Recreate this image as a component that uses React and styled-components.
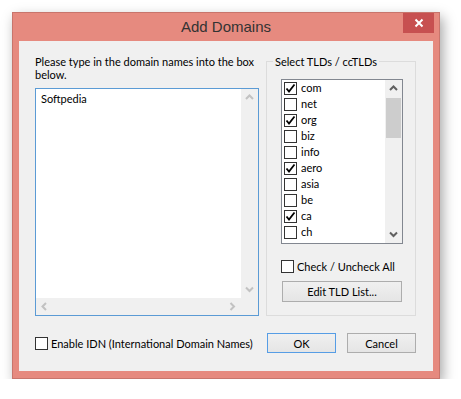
import React, {useState} from 'react';
import styled, {createGlobalStyle} from 'styled-components';

const TLDS = [
    {name: 'com', checked: true},
    {name: 'net', checked: false},
    {name: 'org', checked: true},
    {name: 'biz', checked: false},
    {name: 'info', checked: false},
    {name: 'aero', checked: true},
    {name: 'asia', checked: false},
    {name: 'be', checked: false},
    {name: 'ca', checked: true},
    {name: 'ch', checked: false},
];

const Arrow = ({dir, color}) => {
    // small chevron used by the scrollbars
    const points = {
        up: '1,6 4.5,2.5 8,6',
        down: '1,2.5 4.5,6 8,2.5',
        left: '6,1 2.5,4.5 6,8',
        right: '2.5,1 6,4.5 2.5,8',
    }[dir];
    return (
        <svg width="9" height="9" viewBox="0 0 9 9">
            <polyline points={points} fill="none" stroke={color} strokeWidth="2"/>
        </svg>
    );
};

const CheckBox = ({checked, onClick}) => (
    <Box onClick={onClick}>
        {checked && (
            <svg width="11" height="11" viewBox="0 0 11 11">
                <polyline points="1.5,5.5 4,8.5 9.5,1.5" fill="none" stroke="#000" strokeWidth="1.8"/>
            </svg>
        )}
    </Box>
);

const App = () => {
    const [tlds, setTlds] = useState(TLDS);
    const [all, setAll] = useState(false);
    const [idn, setIdn] = useState(false);

    const toggle = (name) => {
        setTlds(tlds.map(t => t.name === name ? {...t, checked: !t.checked} : t));
    };

    return (
        <>
            <GlobalStyle/>
            <Page>
                <Window>
                    <TitleBar>
                        <Title>Add Domains</Title>
                        <CloseButton>
                            <svg width="10" height="10" viewBox="0 0 10 10">
                                <path d="M1.5 1.5 L8.5 8.5 M8.5 1.5 L1.5 8.5" stroke="#fff" strokeWidth="2"/>
                            </svg>
                        </CloseButton>
                    </TitleBar>
                    <Client>
                        <Column>
                            <Label>Please type in the domain names into the box<br/>below.</Label>
                            <TextBox>
                                <TextContent>Softpedia</TextContent>
                                <VScroll>
                                    <ScrollButton><Arrow dir="up" color="#c2c2c2"/></ScrollButton>
                                    <ScrollButton><Arrow dir="down" color="#c2c2c2"/></ScrollButton>
                                </VScroll>
                                <HScroll>
                                    <ScrollButton><Arrow dir="left" color="#c2c2c2"/></ScrollButton>
                                    <ScrollButton><Arrow dir="right" color="#c2c2c2"/></ScrollButton>
                                </HScroll>
                                <Corner/>
                            </TextBox>
                        </Column>
                        <GroupBox>
                            <Legend>Select TLDs / ccTLDs</Legend>
                            <ListBox>
                                <Items>
                                    {tlds.map(t => (
                                        <Item key={t.name}>
                                            <CheckBox checked={t.checked} onClick={() => toggle(t.name)}/>
                                            <span>{t.name}</span>
                                        </Item>
                                    ))}
                                </Items>
                                <ListScroll>
                                    <ScrollButton><Arrow dir="up" color="#606060"/></ScrollButton>
                                    <Track><Thumb/></Track>
                                    <ScrollButton><Arrow dir="down" color="#606060"/></ScrollButton>
                                </ListScroll>
                            </ListBox>
                            <CheckRow>
                                <CheckBox checked={all} onClick={() => setAll(!all)}/>
                                <span>Check / Uncheck All</span>
                            </CheckRow>
                            <EditButton>Edit TLD List...</EditButton>
                        </GroupBox>
                        <CheckRow>
                            <CheckBox checked={idn} onClick={() => setIdn(!idn)}/>
                            <span>Enable IDN (International Domain Names)</span>
                        </CheckRow>
                        <Buttons>
                            <Button primary>OK</Button>
                            <Button>Cancel</Button>
                        </Buttons>
                    </Client>
                </Window>
            </Page>
        </>
    );
};

const GlobalStyle = createGlobalStyle`
  body {
    margin: 0;
    background: #fff;
    font-family: Lato, "Liberation Sans", sans-serif;
    font-size: 11px;
    color: #000;
  }
`;

const Page = styled.div`
  padding: 12px 0 0 12px;
`;

const Window = styled.div`
  box-sizing: border-box;
  width: 428px;
  height: 367px;
  background: #e68a7f;
  border: 1px solid #c8756c;
  box-shadow: 3px 5px 12px rgba(0, 0, 0, 0.35);
  padding: 0 6px 7px 6px;
  display: flex;
  flex-direction: column;
`;

const TitleBar = styled.div`
  height: 28px;
  margin: 0 -6px;
  display: grid;
  grid-template-columns: 1fr auto 1fr;
  align-items: start;
`;

const Title = styled.div`
  grid-column: 2;
  font-family: "Liberation Sans", sans-serif;
  font-size: 15px;
  line-height: 28px;
  color: #333;
`;

const CloseButton = styled.div`
  grid-column: 3;
  justify-self: end;
  width: 31px;
  height: 20px;
  margin-right: 5px;
  background: #c75050;
  display: flex;
  align-items: center;
  justify-content: center;
`;

const Client = styled.div`
  flex: 1;
  background: #f0f0f0;
  padding: 14px 17px 0 16px;
  display: grid;
  grid-template-columns: 224px 150px;
  column-gap: 7px;
  row-gap: 17px;
  align-content: start;
  align-items: center;
`;

const Column = styled.div`
  display: flex;
  flex-direction: column;
  gap: 7px;
  align-self: start;
`;

const Label = styled.div`
  line-height: 13px;
  white-space: nowrap;
`;

const TextBox = styled.div`
  box-sizing: border-box;
  height: 228px;
  border: 1px solid #5b9bd5;
  background: #fff;
  display: grid;
  grid-template-columns: 1fr 17px;
  grid-template-rows: 1fr 17px;
`;

const TextContent = styled.div`
  padding: 3px 5px;
  line-height: 14px;
`;

const VScroll = styled.div`
  background: #f0f0f0;
  display: flex;
  flex-direction: column;
  justify-content: space-between;
`;

const HScroll = styled.div`
  background: #f0f0f0;
  display: flex;
  justify-content: space-between;
`;

const Corner = styled.div`
  background: #f0f0f0;
`;

const ScrollButton = styled.div`
  width: 17px;
  height: 17px;
  flex: none;
  display: flex;
  align-items: center;
  justify-content: center;
`;

const GroupBox = styled.fieldset`
  margin: 0;
  min-width: 0;
  box-sizing: border-box;
  border: 1px solid #dcdcdc;
  padding: 11px 12px 13px 14px;
  display: flex;
  flex-direction: column;
  align-items: flex-start;
  align-self: start;
`;

const Legend = styled.legend`
  margin-left: -8px;
  padding: 0 2px;
  line-height: 13px;
`;

const ListBox = styled.div`
  box-sizing: border-box;
  width: 122px;
  height: 165px;
  border: 1px solid #828790;
  background: #fff;
  display: grid;
  grid-template-columns: 1fr 17px;
  margin-bottom: 16px;
`;

const Items = styled.div`
  overflow: hidden;
`;

const Item = styled.div`
  height: 16px;
  padding-left: 2px;
  display: flex;
  align-items: center;
  gap: 4px;
  line-height: 16px;
`;

const ListScroll = styled.div`
  background: #f0f0f0;
  display: flex;
  flex-direction: column;
`;

const Track = styled.div`
  flex: 1;
  padding: 1px 1px 0 1px;
`;

const Thumb = styled.div`
  height: 40px;
  background: #cdcdcd;
`;

const Box = styled.div`
  box-sizing: border-box;
  width: 13px;
  height: 13px;
  flex: none;
  border: 1px solid #333;
  background: #fff;
  display: flex;
  align-items: center;
  justify-content: center;
  cursor: default;
`;

const CheckRow = styled.div`
  display: flex;
  align-items: center;
  gap: 3px;
  line-height: 13px;
  white-space: nowrap;
`;

const Buttons = styled.div`
  display: flex;
  justify-content: flex-end;
  gap: 11px;
`;

const Button = styled.button`
  box-sizing: border-box;
  width: 69px;
  height: 20px;
  margin: 0;
  padding: 0;
  font-family: inherit;
  font-size: 11px;
  color: #000;
  border: 1px solid ${p => p.primary ? '#569de5' : '#adadad'};
  background: linear-gradient(#f0f0f0, #e5e5e5);
`;

const EditButton = styled(Button)`
  width: 120px;
  height: 21px;
  margin: 8px 0 0 1px;
`;

export default App;
